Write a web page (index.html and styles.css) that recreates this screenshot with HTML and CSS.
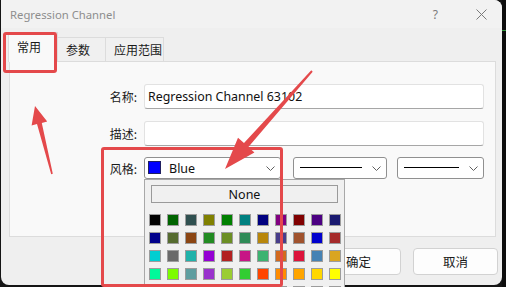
FILE: index.html
```html
<!DOCTYPE html>
<html>
<head>
<meta charset="utf-8">
<link rel="stylesheet" href="styles.css">
</head>
<body>
<div class="screen">
  <div class="dialog">
    <div class="titlebar">
      <span class="title">Regression Channel</span>
      <span class="help">?</span>
      <svg class="close" width="11" height="11" viewBox="0 0 11 11"><path d="M0.5 0.5 L10.5 10.5 M10.5 0.5 L0.5 10.5" stroke="#7a7a7a" stroke-width="1" fill="none"/></svg>
    </div>
    <div class="tabs">
      <div class="tab active">常用</div>
      <div class="tab t2">参数</div>
      <div class="tab t3">应用范围</div>
    </div>
    <div class="panel">
      <div class="row r1">
        <div class="label">名称:</div>
        <div class="input">Regression Channel 63102</div>
      </div>
      <div class="row r2">
        <div class="label">描述:</div>
        <div class="input"></div>
      </div>
      <div class="row r3">
        <div class="label">风格:</div>
        <div class="combo c1">
          <span class="swatch"></span><span class="ctext">Blue</span>
          <svg class="chev" width="9" height="5" viewBox="0 0 9 5"><path d="M0.5 0.5 L4.5 4.5 L8.5 0.5" stroke="#606060" fill="none"/></svg>
          <div class="popup">
            <div class="none">None</div>
            <div class="grid">
              <span class="sq" style="background:#000000"></span><span class="sq" style="background:#006400"></span><span class="sq" style="background:#2f4f4f"></span><span class="sq" style="background:#808000"></span><span class="sq" style="background:#008000"></span><span class="sq" style="background:#008080"></span><span class="sq" style="background:#000080"></span><span class="sq" style="background:#800080"></span><span class="sq" style="background:#800000"></span><span class="sq" style="background:#4b0082"></span><span class="sq" style="background:#191970"></span>
              <span class="sq" style="background:#00008b"></span><span class="sq" style="background:#556b2f"></span><span class="sq" style="background:#8b4513"></span><span class="sq" style="background:#228b22"></span><span class="sq" style="background:#6b8e23"></span><span class="sq" style="background:#2e8b57"></span><span class="sq" style="background:#b8860b"></span><span class="sq" style="background:#483d8b"></span><span class="sq" style="background:#a0522d"></span><span class="sq" style="background:#0000cd"></span><span class="sq" style="background:#a52a2a"></span>
              <span class="sq" style="background:#00ced1"></span><span class="sq" style="background:#696969"></span><span class="sq" style="background:#20b2aa"></span><span class="sq" style="background:#9400d3"></span><span class="sq" style="background:#b22222"></span><span class="sq" style="background:#c71585"></span><span class="sq" style="background:#3cb371"></span><span class="sq" style="background:#d2691e"></span><span class="sq" style="background:#dc143c"></span><span class="sq" style="background:#4682b4"></span><span class="sq" style="background:#daa520"></span>
              <span class="sq" style="background:#00fa9a"></span><span class="sq" style="background:#7cfc00"></span><span class="sq" style="background:#5f9ea0"></span><span class="sq" style="background:#9932cc"></span><span class="sq" style="background:#9acd32"></span><span class="sq" style="background:#32cd32"></span><span class="sq" style="background:#ff4500"></span><span class="sq" style="background:#ff8c00"></span><span class="sq" style="background:#ffa500"></span><span class="sq" style="background:#ffd700"></span><span class="sq" style="background:#ffff00"></span>
              <span class="sq" style="background:#c0c0c0"></span><span class="sq" style="background:#c0c0c0"></span><span class="sq" style="background:#c0c0c0"></span><span class="sq" style="background:#c0c0c0"></span><span class="sq" style="background:#c0c0c0"></span><span class="sq" style="background:#c0c0c0"></span><span class="sq" style="background:#c0c0c0"></span><span class="sq" style="background:#c0c0c0"></span><span class="sq" style="background:#c0c0c0"></span><span class="sq" style="background:#c0c0c0"></span><span class="sq" style="background:#c0c0c0"></span>
            </div>
          </div>
        </div>
        <div class="combo c2">
          <span class="line"></span>
          <svg class="chev" width="9" height="5" viewBox="0 0 9 5"><path d="M0.5 0.5 L4.5 4.5 L8.5 0.5" stroke="#606060" fill="none"/></svg>
        </div>
        <div class="combo c3">
          <span class="line"></span>
          <svg class="chev" width="9" height="5" viewBox="0 0 9 5"><path d="M0.5 0.5 L4.5 4.5 L8.5 0.5" stroke="#606060" fill="none"/></svg>
        </div>
      </div>
    </div>
    <div class="buttons">
      <div class="btn">确定</div>
      <div class="btn">取消</div>
    </div>
  </div>
  <div class="chart-edge"><span class="green"></span></div>

  <div class="mark mark1"></div>
  <div class="mark mark2"></div>
  <svg class="arrows" width="506" height="287" viewBox="0 0 506 287">
    <polygon fill="#e4494b" points="312.7,71.7 248.4,147.1 254.4,152.4 225,169 238,137.8 244,143.1 311.3,70.3"/>
    <polygon fill="#e4494b" points="52.8,173.8 41.8,122.9 47.2,121.5 35,106 31.6,125.4 37,124.1 51.2,174.2"/>
  </svg>
</div>
</body>
</html>
```

FILE: styles.css
```css
* { box-sizing: border-box; }
html, body { margin: 0; padding: 0; }
body {
  width: 506px;
  height: 287px;
  overflow: hidden;
  background: #151515;
  font-family: "Noto Sans", "Noto Sans CJK SC", sans-serif;
}
.screen {
  position: relative;
  width: 506px;
  height: 287px;
  display: flex;
}
.dialog {
  margin-left: 1px;
  width: 501px;
  height: 285px;
  background: #efefef;
  border-radius: 0 8px 8px 8px;
  display: flex;
  flex-direction: column;
}
.titlebar {
  height: 28px;
  display: flex;
  align-items: center;
  padding-left: 9px;
  background: #f2f2f2;
  border-radius: 0 8px 0 0;
}
.title {
  font-size: 11.3px;
  color: #8e8e8e;
  flex: 1;
}
.help {
  font-size: 12px;
  color: #7a7a7a;
  margin-right: 38px;
}
.close { margin-right: 15px; }

.tabs {
  height: 33px;
  display: flex;
  align-items: flex-end;
  padding-left: 7px;
  position: relative;
  z-index: 2;
}
.tab {
  font-family: "Noto Sans CJK SC", sans-serif;
  font-size: 12px;
  color: #1a1a1a;
  height: 24px;
  padding-left: 8px;
  display: flex;
  align-items: center;
  background: #f0f0f0;
  border: 1px solid #dcdcdc;
  border-bottom: none;
}
.tab.active {
  width: 50px;
  height: 30px;
  background: #f9f9f9;
  margin-bottom: -1px;
  padding-bottom: 2px;
}
.tab.t2 { width: 48px; border-left: none; }
.tab.t3 { width: 58px; border-left: none; }

.panel {
  margin: 0 6px 0 8px;
  height: 176px;
  background: #f9f9f9;
  border: 1px solid #dcdcdc;
  padding: 22px 11px 0 0;
  position: relative;
  z-index: 1;
}
.row {
  display: flex;
  align-items: center;
}
.r1 { height: 25px; margin-bottom: 12px; }
.r2 { height: 25px; margin-bottom: 11px; }
.r3 { height: 22px; }
.label {
  width: 134px;
  flex: none;
  text-align: right;
  padding-right: 7px;
  font-family: "Noto Sans CJK SC", sans-serif;
  font-size: 12px;
  color: #1a1a1a;
}
.input {
  flex: 1;
  height: 25px;
  background: #ffffff;
  border: 1px solid #e2e2e2;
  border-bottom-color: #a6a6a6;
  border-radius: 3px;
  font-size: 12.4px;
  color: #111;
  padding-left: 3px;
  display: flex;
  align-items: center;
}
.combo {
  position: relative;
  height: 22px;
  background: #ffffff;
  border: 1px solid #909090;
  border-radius: 3px;
  display: flex;
  align-items: center;
}
.c1 { width: 137px; padding-left: 3px; }
.c2 { width: 95px; margin-left: 12px; padding-left: 6px; }
.c3 { width: 87px; margin-left: 10px; padding-left: 6px; }
.swatch {
  width: 13px;
  height: 13px;
  background: #0000ff;
  border: 1px solid #202060;
  margin-top: -1px;
}
.ctext {
  font-size: 12.5px;
  color: #111;
  margin-left: 8px;
  flex: 1;
}
.c1 .chev { margin-right: 5px; }
.line {
  height: 1px;
  background: #000;
  flex: 1;
  margin-top: -1px;
}
.c2 .line { margin-right: 10px; }
.c3 .line { margin-right: 10px; }
.c2 .chev, .c3 .chev { margin-right: 5px; }

.popup {
  position: absolute;
  left: -1px;
  top: 21px;
  width: 201px;
  height: 120px;
  background: #f0f0f0;
  border: 1px solid #a8a8a8;
  padding: 5px 4px 0 4px;
  z-index: 5;
}
.none {
  margin-left: 2px;
  width: 187px;
  height: 18px;
  border: 1px solid #9a9a9a;
  display: flex;
  align-items: center;
  justify-content: center;
  font-size: 12.5px;
  color: #111;
}
.grid {
  margin-top: 11px;
  display: grid;
  grid-template-columns: repeat(11, 12px);
  grid-auto-rows: 12px;
  column-gap: 6px;
  row-gap: 6px;
}
.sq {
  display: block;
  width: 12px;
  height: 12px;
  border: 1px solid #9c9c9c;
}

.buttons {
  margin-top: 11px;
  height: 27px;
  display: flex;
  justify-content: flex-end;
  padding-right: 4px;
  gap: 12px;
}
.btn {
  width: 85px;
  height: 27px;
  background: #fdfdfd;
  border: 1px solid #d2d2d2;
  border-radius: 4px;
  display: flex;
  align-items: center;
  justify-content: center;
  font-family: "Noto Sans CJK SC", sans-serif;
  font-size: 12.5px;
  color: #1a1a1a;
}

.chart-edge {
  flex: 1;
  height: 287px;
  background: #0d0d0d;
  position: relative;
}
.green {
  position: absolute;
  left: 0;
  right: 0;
  top: 30px;
  height: 1px;
  background: #2f9a3a;
}

.mark {
  position: absolute;
  border: 3.5px solid #e4494b;
  border-radius: 3px;
  z-index: 10;
}
.mark1 { left: 3px; top: 32px; width: 54px; height: 41px; }
.mark2 { left: 101px; top: 147px; width: 182px; height: 140px; }
.arrows {
  position: absolute;
  left: 0;
  top: 0;
  z-index: 11;
}
```
